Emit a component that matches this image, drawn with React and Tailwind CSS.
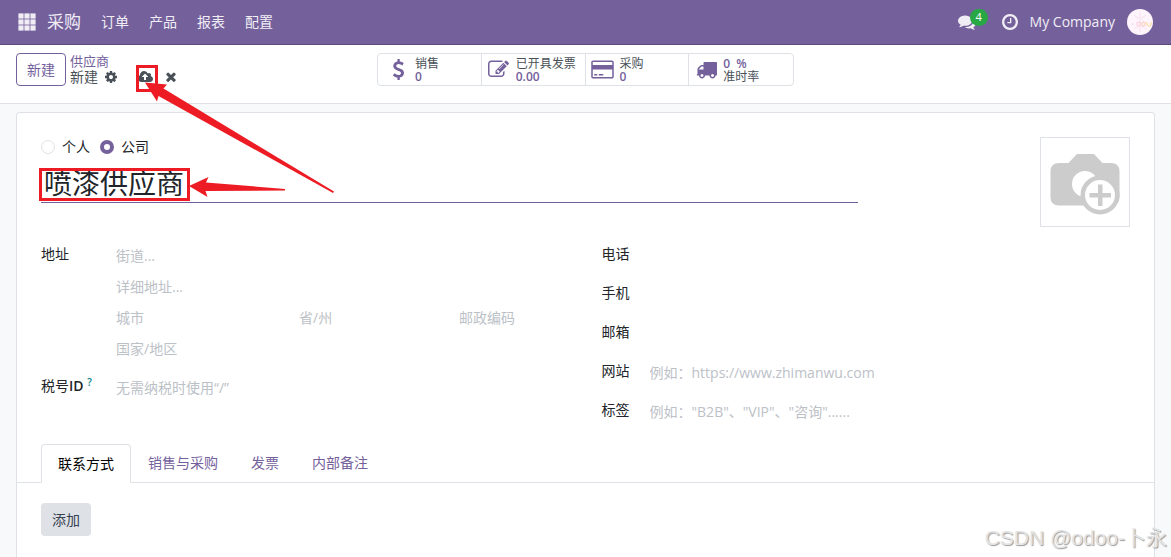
import React, { useState } from 'react';

const ICONS = {
  comments: {
    box: '0 0 1792 1792',
    d: 'M1408 768q0 139-94 257t-256.5 186.5-353.5 68.5q-86 0-176-16-124 88-278 128-36 9-86 16h-3q-11 0-20.5-8t-11.5-21q-1-3-1-6.5t.5-6.5 2-6l2.5-5 3.5-5.5 4-5 4.5-5 4-4.5q5-6 23-25t26-29.5 22.5-29 25-38.5 20.5-44q-124-72-195-177t-71-224q0-139 94-257t256.5-186.5 353.5-68.5 353.5 68.5 256.5 186.5 94 257zm384 256q0 120-71 224.5t-195 176.5q10 24 20.5 44t25 38.5 22.5 29 26 29.5 23 25q1 1 4 4.5t4.5 5 4 5 3.5 5.5l2.5 5 2 6 .5 6.5-1 6.5q-3 14-13 22t-22 7q-50-7-86-16-154-40-278-128-90 16-176 16-271 0-472-132 58 4 88 4 161 0 309-45t264-129q125-92 192-212t67-254q0-77-23-152 129 71 204 178t75 230z',
  },
  clock: {
    box: '128 128 1536 1536',
    d: 'M1024 544v448q0 14-9 23t-23 9h-320q-14 0-23-9t-9-23v-64q0-14 9-23t23-9h224v-352q0-14 9-23t23-9h64q14 0 23 9t9 23zm416 352q0-148-73-273t-198-198-273-73-273 73-198 198-73 273 73 273 198 198 273 73 273-73 198-198 73-273zm224 0q0 209-103 385.5t-279.5 279.5-385.5 103-385.5-103-279.5-279.5-103-385.5 103-385.5 279.5-279.5 385.5-103 385.5 103 279.5 279.5 103 385.5z',
  },
  cog: {
    box: '128 128 1536 1536',
    d: 'M1152 896q0-106-75-181t-181-75-181 75-75 181 75 181 181 75 181-75 75-181zm512-109v222q0 12-8 23t-20 13l-185 28q-19 54-39 91 35 50 107 138 10 12 10 25t-9 23q-27 37-99 108t-94 71q-12 0-26-9l-138-108q-44 23-91 38-16 136-29 186-7 28-36 28h-222q-14 0-24.5-8.5t-11.5-21.5l-28-184q-49-16-90-37l-141 107q-10 9-25 9-14 0-25-11-126-114-165-168-7-10-7-23 0-12 8-23 15-21 51-66.5t54-70.5q-27-50-41-99l-183-27q-13-2-21-12.5t-8-23.5v-222q0-12 8-23t19-13l186-28q14-46 39-92-40-57-107-138-10-12-10-24 0-10 9-23 26-36 98.5-107.5t94.5-71.5q13 0 26 10l138 107q44-23 91-38 16-136 29-186 7-28 36-28h222q14 0 24.5 8.5t11.5 21.5l28 184q49 16 90 37l142-107q9-9 24-9 13 0 25 10 129 119 165 170 7 8 7 22 0 12-8 23-15 21-51 66.5t-54 70.5q26 50 41 98l183 28q13 2 21 12.5t8 23.5z',
  },
  cloudUpload: {
    box: '-64 128 1920 1536',
    d: 'M1216 864q0-14-9-23l-352-352q-9-9-23-9t-23 9l-351 351q-10 12-10 24 0 14 9 23t23 9h224v352q0 13 9.5 22.5t22.5 9.5h192q13 0 22.5-9.5t9.5-22.5v-352h224q13 0 22.5-9.5t9.5-22.5zm640 288q0 159-112.5 271.5t-271.5 112.5h-1088q-185 0-316.5-131.5t-131.5-316.5q0-130 70-240t188-165q-2-30-2-43 0-212 150-362t362-150q156 0 285.5 87t188.5 231q71-62 166-62 106 0 181 75t75 181q0 76-41 138 130 31 213.5 135.5t83.5 238.5z',
  },
  times: {
    box: '302 302 1188 1252',
    d: 'M1490 1322q0 40-28 68l-136 136q-28 28-68 28t-68-28l-294-294-294 294q-28 28-68 28t-68-28l-136-136q-28-28-28-68t28-68l294-294-294-294q-28-28-28-68t28-68l136-136q28-28 68-28t68 28l294 294 294-294q28-28 68-28t68 28l136 136q28 28 28 68t-28 68l-294 294 294 294q28 28 28 68z',
  },
  dollar: {
    box: '0 0 1792 1792',
    d: 'M1362 1185q0 153-99.5 263.5t-258.5 136.5v175q0 14-9 23t-23 9h-135q-13 0-22.5-9.5t-9.5-22.5v-175q-66-9-127.5-31t-101.5-44.5-74-48-46.5-37.5-17.5-18q-17-21-2-41l103-135q7-10 23-12 15-2 24 9l2 2q113 99 243 125 37 8 74 8 81 0 142.5-43t61.5-122q0-28-15-53t-33.5-42-58.5-37.5-66-32-80-32.5q-39-16-61.5-25t-61.5-26.5-62.5-31-56.5-35.5-53.5-42.5-43.5-49-35.5-58-21-66.5-8.5-78q0-138 98-242t255-134v-180q0-13 9.5-22.5t22.5-9.5h135q14 0 23 9t9 23v176q57 6 110.5 23t87 33.5 63.5 37.5 39 29 15 14q17 18 5 38l-81 146q-8 15-23 16-14 3-27-7-3-3-14.5-12t-39-26.5-58.5-32-74.5-26-85.5-11.5q-95 0-155 43t-60 111q0 26 8.5 48t29.5 41.5 39.5 33 56 31 60.5 27 70 27.5q53 20 81 31.5t76 35 75.5 42.5 62 50 53 63.5 31.5 76.5 13 94z',
  },
  edit: {
    box: '0 0 1792 1792',
    d: 'M888 1184l116-116-152-152-116 116v56h96v96h56zm440-720q-16-16-33 1l-350 350q-17 17-1 33t33-1l350-350q17-17 1-33zm80 594v190q0 119-84.5 203.5t-203.5 84.5h-832q-119 0-203.5-84.5t-84.5-203.5v-832q0-119 84.5-203.5t203.5-84.5h832q63 0 117 25 15 7 18 23 3 17-9 29l-49 49q-14 14-32 8-23-6-45-6h-832q-66 0-113 47t-47 113v832q0 66 47 113t113 47h832q66 0 113-47t47-113v-126q0-13 9-22l64-64q15-15 35-7t20 29zm-96-738l288 288-672 672h-288v-288zm444 132l-92 92-288-288 92-92q28-28 68-28t68 28l152 152q28 28 28 68t-28 68z',
  },
  card: {
    box: '0 0 1920 1792',
    d: 'M1760 128q66 0 113 47t47 113v1216q0 66-47 113t-113 47h-1600q-66 0-113-47t-47-113v-1216q0-66 47-113t113-47h1600zm-1600 128q-13 0-22.5 9.5t-9.5 22.5v224h1664v-224q0-13-9.5-22.5t-22.5-9.5h-1600zm1600 1280q13 0 22.5-9.5t9.5-22.5v-608h-1664v608q0 13 9.5 22.5t22.5 9.5h1600zm-1504-128v-128h256v128h-256zm384 0v-128h384v128h-384z',
  },
  truck: {
    box: '0 0 1792 1792',
    d: 'M640 1408q0-52-38-90t-90-38-90 38-38 90 38 90 90 38 90-38 38-90zm-384-512h384v-256h-158q-13 0-22 9l-195 195q-9 9-9 22v30zm1280 512q0-52-38-90t-90-38-90 38-38 90 38 90 90 38 90-38 38-90zm256-1088v1024q0 15-4 26.5t-13.5 18.5-16.5 11.5-23.5 6-22.5 2-25.5 0-22.5-.5q0 106-75 181t-181 75-181-75-75-181h-384q0 106-75 181t-181 75-181-75-75-181h-64q-3 0-22.5.5t-25.5 0-22.5-2-23.5-6-16.5-11.5-13.5-18.5-4-26.5q0-26 19-45t45-19v-320q0-8-.5-35t0-38 2.5-34.5 6.5-37 14-30.5 22.5-30l198-198q19-19 50.5-32t58.5-13h160v-192q0-26 19-45t45-19h1024q26 0 45 19t19 45z',
  },
};

const Icon = ({ name, className }) => (
  <svg viewBox={ICONS[name].box} className={className} fill="currentColor" aria-hidden="true">
    <path d={ICONS[name].d} />
  </svg>
);

const Navbar = () => (
  <header className="flex h-[45px] shrink-0 items-center border-b border-[#5a4b7c] bg-[#74619c] pl-4 pr-[18px] text-[#f0edf5]">
    <button type="button" aria-label="应用" className="px-0.5">
      <svg viewBox="0 0 18 18" className="h-[18px] w-[18px]" fill="currentColor">
        {[0, 6, 12].map((y) =>
          [0, 6, 12].map((x) => <rect key={`${x}-${y}`} x={x + 0.4} y={y + 0.4} width="5.2" height="5.2" />)
        )}
      </svg>
    </button>
    <a href="#" className="ml-[9px] text-[17px]">采购</a>
    <nav className="ml-5 flex gap-5 text-sm">
      <a href="#">订单</a>
      <a href="#">产品</a>
      <a href="#">报表</a>
      <a href="#">配置</a>
    </nav>
    <div className="ml-auto flex items-center">
      <button type="button" aria-label="消息" className="relative mr-[26px]">
        <Icon name="comments" className="h-[18px] w-[18px]" />
        <span className="absolute -top-1 left-3 flex h-[17px] w-[18px] items-center justify-center rounded-full bg-[#28a745] text-[11px] text-white">
          4
        </span>
      </button>
      <button type="button" aria-label="活动" className="mr-3">
        <Icon name="clock" className="h-4 w-4" />
      </button>
      <button type="button" className="flex items-center gap-3 text-sm">
        My Company
        <svg viewBox="0 0 26 26" className="h-[26px] w-[26px]">
          <circle cx="13" cy="13" r="13" fill="#fdf5fb" />
          <g fill="none" strokeWidth="1.2">
            <path d="M13 3v20M7 6l5 4M19 6l-5 4M7 20l5-3M19 20l-5-3" stroke="#fbe3f1" />
            <circle cx="11.5" cy="15" r="1.800" stroke="#f9d3e0" />
            <circle cx="16.5" cy="15" r="1.800" stroke="#fbd0bf" />
            <path d="M20 13v2q0 2 2 2t2-2v-2" stroke="#fbe0a8" />
            <path d="M4 15h3" stroke="#f6dff3" />
          </g>
        </svg>
      </button>
    </div>
  </header>
);

const StatButton = ({ icon, iconClass, label, value, valueFirst }) => (
  <button
    type="button"
    className="flex w-26 items-center border-r border-[#dee2e6] text-left text-xs leading-[13px] last:border-r-0"
  >
    <span className="flex min-w-[34px] shrink-0 justify-center text-[#74619c]">
      <Icon name={icon} className={iconClass} />
    </span>
    <span className={valueFirst ? 'flex flex-col-reverse' : 'flex flex-col'}>
      <span className="whitespace-nowrap text-[#495057]">{label}</span>
      <span className="whitespace-pre font-semibold text-[#74619c]">{value}</span>
    </span>
  </button>
);

const ControlPanel = () => (
  <div className="grid h-[59px] shrink-0 grid-cols-[361px_1fr] border-b border-[#dee2e6] bg-white px-4 pt-2">
    <div className="flex items-start">
      <button type="button" className="h-[33px] w-[50px] rounded border border-[#74619c] text-sm text-[#74619c]">
        新建
      </button>
      <div className="ml-1 text-sm leading-4">
        <a href="#" className="block text-[13px] leading-4 text-[#74619c]">供应商</a>
        <div className="flex items-center text-[#495057]">
          <span>新建</span>
          <button type="button" aria-label="操作" className="ml-[7px]">
            <Icon name="cog" className="h-3 w-3" />
          </button>
          <button type="button" aria-label="手动保存" className="ml-[21px]">
            <Icon name="cloudUpload" className="h-3 w-[15px]" />
          </button>
          <button type="button" aria-label="放弃更改" className="ml-[13px]">
            <Icon name="times" className="h-2.5 w-2.5" />
          </button>
        </div>
      </div>
    </div>
    <div className="flex h-[33px] w-[417px] rounded border border-[#dee2e6]">
      <StatButton icon="dollar" iconClass="ml-2.5 mr-1.5 h-[21px] w-[21px]" label="销售" value="0" />
      <StatButton icon="edit" iconClass="h-[21px] w-[21px]" label="已开具发票" value="0.00" />
      <StatButton icon="card" iconClass="h-[21px] w-[23px]" label="采购" value="0" />
      <StatButton icon="truck" iconClass="h-[21px] w-[21px]" label="准时率" value={'0  %'} valueFirst />
    </div>
  </div>
);

const inputClass = 'block h-[31px] w-full min-w-0 bg-transparent text-sm text-[#212529] outline-none placeholder:text-[#bcc1c7]';

const AddressFields = () => (
  <div className="grid grid-cols-[75px_1fr] content-start gap-y-2">
    <label htmlFor="street" className="text-sm leading-[27px]">地址</label>
    <div>
      <input id="street" className={inputClass} placeholder="街道..." />
      <input aria-label="详细地址" className={inputClass} placeholder="详细地址..." />
      <div className="grid grid-cols-[183px_160px_1fr]">
        <input aria-label="城市" className={inputClass} placeholder="城市" />
        <input aria-label="省/州" className={inputClass} placeholder="省/州" />
        <input aria-label="邮政编码" className={inputClass} placeholder="邮政编码" />
      </div>
      <input aria-label="国家/地区" className={inputClass} placeholder="国家/地区" />
    </div>
    <label htmlFor="vat" className="text-sm leading-[27px]">
      税号<span className="font-semibold">ID</span> <sup className="text-[10px] font-semibold text-[#017e84]">?</sup>
    </label>
    <input id="vat" className={inputClass} placeholder="无需纳税时使用“/”" />
  </div>
);

const contactRows = [
  { id: 'phone', label: '电话' },
  { id: 'mobile', label: '手机' },
  { id: 'email', label: '邮箱' },
  { id: 'website', label: '网站', placeholder: '例如：https://www.zhimanwu.com' },
  { id: 'tags', label: '标签', placeholder: '例如："B2B"、"VIP"、"咨询"......' },
];

const ContactFields = () => (
  <div className="flex flex-col gap-2">
    {contactRows.map((row) => (
      <div key={row.id} className="grid grid-cols-[48px_1fr]">
        <label htmlFor={row.id} className="text-sm leading-[27px]">{row.label}</label>
        <input id={row.id} className={inputClass} placeholder={row.placeholder} />
      </div>
    ))}
  </div>
);

const TypeRadio = ({ value, label, selected, onSelect }) => (
  <label className="flex items-center gap-[7px]">
    <input
      type="radio"
      name="company_type"
      value={value}
      checked={selected === value}
      onChange={() => onSelect(value)}
      className="h-3.5 w-3.5 appearance-none rounded-full border border-[#dee2e6] bg-white checked:border-4 checked:border-[#74619c]"
    />
    {label}
  </label>
);

const CameraPlaceholder = () => (
  <button type="button" aria-label="上传图片" className="h-[90px] w-[90px] shrink-0 border border-[#dee2e6]">
    <svg viewBox="0 0 88 88" className="h-full w-full">
      <path
        d="M18 25h9.500l8.500-9h17l8.500 9H70q8.500 0 8.500 8.500V59q0 8.500-8.500 8.500H18q-8.500 0-8.500-8.500V33.500q0-8.500 8.500-8.500z"
        fill="#ccc"
      />
      <circle cx="44" cy="46" r="13" fill="#fff" />
      <circle cx="59" cy="57" r="19.500" fill="#ccc" />
      <circle cx="59" cy="57" r="15" fill="#fff" />
      <path d="M57 46.500h4.500V55H70v4.500h-8.500V68H57v-8.500h-8.500V55H57z" fill="#ccc" />
    </svg>
  </button>
);

const TABS = ['联系方式', '销售与采购', '发票', '内部备注'];

const Notebook = () => {
  const [active, setActive] = useState(0);

  return (
    <div className="-mx-6 mt-[17px]">
      <div role="tablist" className="flex gap-px border-b border-[#dee2e6] px-6 text-sm">
        {TABS.map((tab, i) => (
          <button
            key={tab}
            type="button"
            role="tab"
            aria-selected={i === active}
            onClick={() => setActive(i)}
            className={
              i === active
                ? '-mb-px h-[39px] rounded-t border border-[#dee2e6] border-b-white bg-white px-4 text-black'
                : 'h-[38px] px-4 text-[#74619c]'
            }
          >
            {tab}
          </button>
        ))}
      </div>
      <div className="px-6 pt-5">
        <button type="button" className="h-[33px] w-[50px] rounded bg-[#dee2e6] text-sm text-[#374151]">
          添加
        </button>
      </div>
    </div>
  );
};

// Red markers drawn over the save button and the name field
const Annotations = () => (
  <svg viewBox="0 0 340 210" className="pointer-events-none absolute top-0 left-0 h-[210px] w-[340px]">
    <rect x="137.500" y="66.500" width="19" height="24" fill="none" stroke="#ed1c24" strokeWidth="3" />
    <rect x="40.500" y="169.500" width="148" height="30" fill="none" stroke="#ed1c24" strokeWidth="3" />
    <path d="M145 82.500L167 84.500 163.500 88.500 334 191.500 333 193 158.500 96 157 101.500z" fill="#ed1c24" />
    <path d="M189 186L208.500 177 206 182.500 285 189 285 190.500 205.500 191 207.500 197z" fill="#ed1c24" />
  </svg>
);

const App = () => {
  const [companyType, setCompanyType] = useState('company');
  const [name, setName] = useState('喷漆供应商');

  return (
    <div className="relative flex h-screen flex-col overflow-hidden bg-[#f8f9fa] font-['Open_Sans','Noto_Sans_CJK_SC',sans-serif] text-[#212529]">
      <Navbar />
      <ControlPanel />
      <main className="mx-4 mt-2 flex-1 rounded-t border border-b-0 border-[#dee2e6] bg-white px-6 pt-6">
        <div className="flex items-start justify-between">
          <div className="w-3/4">
            <div className="flex gap-2.5 text-sm">
              <TypeRadio value="person" label="个人" selected={companyType} onSelect={setCompanyType} />
              <TypeRadio value="company" label="公司" selected={companyType} onSelect={setCompanyType} />
            </div>
            <input
              aria-label="名称"
              value={name}
              onChange={(e) => setName(e.target.value)}
              className="mt-1.5 block h-10 w-full border-b border-[#74619c] bg-transparent px-[3px] text-[28px] outline-none"
            />
          </div>
          <CameraPlaceholder />
        </div>
        <div className="mt-[13px] grid grid-cols-2 gap-x-8">
          <AddressFields />
          <ContactFields />
        </div>
        <Notebook />
      </main>
      <Annotations />
      <div className="pointer-events-none absolute right-1 bottom-1 font-['Liberation_Sans','Noto_Sans_CJK_SC',sans-serif] text-[21px] text-[#e4e4e4] [text-shadow:1px_1px_1px_#999]">
        CSDN @odoo-卜永
      </div>
    </div>
  );
};

export default App;
